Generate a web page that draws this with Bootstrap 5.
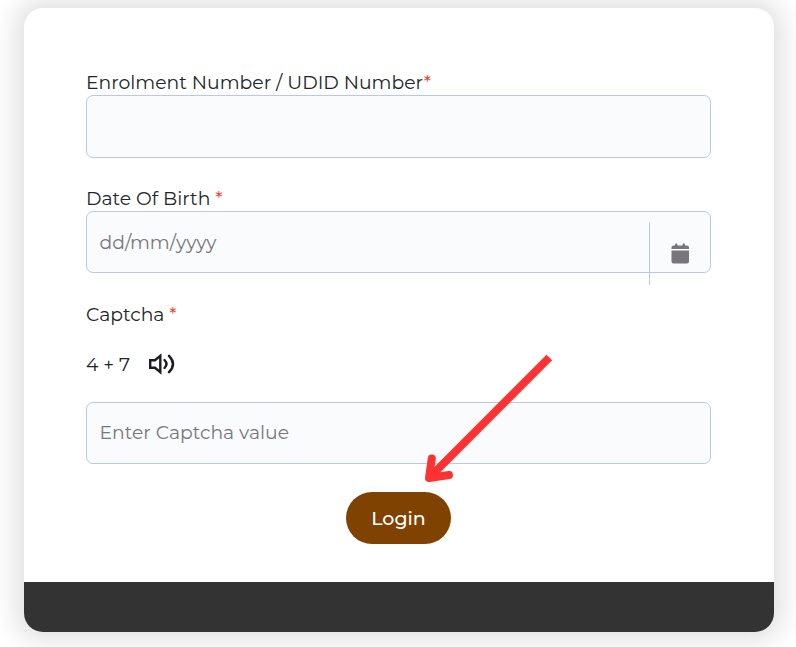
<!DOCTYPE html>
<html lang="en">
<head>
<meta charset="utf-8">
<meta name="viewport" content="width=device-width, initial-scale=1">
<title>Login</title>
<link href="https://cdn.jsdelivr.net/npm/bootstrap@5.3.0/dist/css/bootstrap.min.css" rel="stylesheet">
<style>
body{font-family:Montserrat,Inter,sans-serif;font-size:18.78px;font-weight:400;color:#212529;background:#fff;height:647px;overflow:hidden}
.login-card{width:750px;height:624px;margin:8px 0 0 24px;border-radius:19px;box-shadow:0 0 26px 9px rgba(0,0,0,.12);overflow:hidden}
.login-form{padding:60px 63px 0 62px}
.field-label{height:27px;line-height:30px;white-space:nowrap}
.label-dob{margin-top:26px}
.label-captcha{margin-top:27px}
.req{color:#e03a1e}
.field-box.form-control{height:62px;border:1px solid #bcc6e8;border-radius:7px;background:#fafbfd;font-size:18.78px;padding:0 13px 1px 12.500px;color:#212529}
.field-box.date-box{padding-top:1px;padding-bottom:0}
.field-box.tall{height:63px}
.field-box::placeholder{color:#77777a;opacity:1}
.date-toggle{right:0;top:11px;width:62px;height:63px;border-left:1px solid #bcc6e8}
.sum{height:75px}
.sum span{padding-top:1px}
.sum svg{margin-left:17px;margin-bottom:1px}
.button-row{padding-top:28px}
.login-btn.btn{width:105px;height:52px;border-radius:26px;background:#804200;color:#fff;font-size:19px;font-weight:500;padding:2px 0 0;border:0}
.card-foot{height:50px;background:#333}
.pointer-arrow{left:415px;top:345px}
</style>
<script src="https://cdn.jsdelivr.net/npm/bootstrap@5.3.0/dist/js/bootstrap.bundle.min.js"></script>
</head>
<body class="position-relative">
<main class="overflow-hidden h-100">
<div class="login-card bg-white d-flex flex-column">
  <form class="login-form flex-grow-1">
    <div class="field-label"><label for="enrol">Enrolment Number / UDID Number<span class="req">*</span></label></div>
    <input id="enrol" type="text" class="form-control field-box tall">
    <div class="field-label label-dob"><label for="dob">Date Of Birth <span class="req">*</span></label></div>
    <div class="position-relative">
      <input id="dob" type="text" class="form-control field-box date-box" placeholder="dd/mm/yyyy">
      <div class="date-toggle position-absolute d-flex align-items-center justify-content-center">
        <svg width="19" height="21" viewBox="0 0 19 21" fill="#78757b" aria-hidden="true"><path d="M.5 6V4.500Q.5 2.500 2.500 2.500H4V1.800Q4 .5 5.200 .5T6.500 1.800V2.500H11.500V1.800Q11.500 .5 12.800 .5T14 1.800V2.500H16Q18 2.500 18 4.500V6ZM.5 7.400H18V18.500Q18 20.500 16 20.500H2.500Q.5 20.500 .5 18.500Z"/></svg>
      </div>
    </div>
    <div class="field-label label-captcha"><label for="cap">Captcha <span class="req">*</span></label></div>
    <div class="sum d-flex align-items-center">
      <span>4 + 7</span>
      <svg width="30" height="22" viewBox="0 0 30 22" fill="none" stroke="#1c1c28" stroke-width="2.400" aria-hidden="true"><path d="M3.200 7.200H8L13.300 2.800V19.200L8 14.800H3.200Z"/><path d="M17.500 7Q21.500 11 17.500 15M22 2.800Q30 11 22 19.200" stroke-linecap="round"/></svg>
    </div>
    <input id="cap" type="text" class="form-control field-box" placeholder="Enter Captcha value">
    <div class="button-row text-center"><button type="button" class="btn login-btn">Login</button></div>
  </form>
  <div class="card-foot"></div>
</div>
</main>
<svg class="pointer-arrow position-absolute" width="145" height="145" viewBox="415 345 145 145" fill="none" stroke="#ff3131" aria-hidden="true"><path d="M549.300 357.500L429.500 477.500" stroke-width="8"/><path d="M431.800 458.500L429 478L449 475" stroke-width="8" stroke-linecap="round" stroke-linejoin="round"/></svg>
</body>
</html>
